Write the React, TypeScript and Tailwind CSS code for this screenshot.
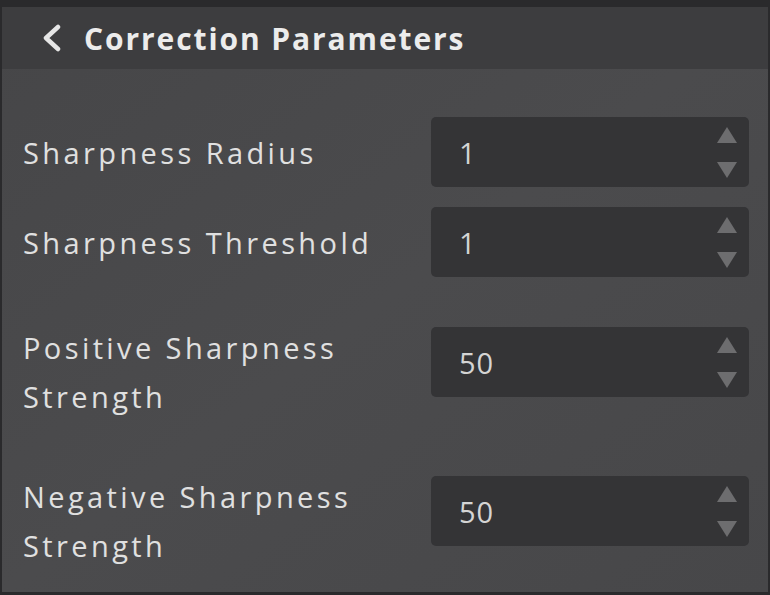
type Field = {
  label: string[]
  value: string
}

const fields: Field[] = [
  { label: ['Sharpness Radius'], value: '1' },
  { label: ['Sharpness Threshold'], value: '1' },
  { label: ['Positive Sharpness', 'Strength'], value: '50' },
  { label: ['Negative Sharpness', 'Strength'], value: '50' },
]

function Stepper({ value }: { value: string }) {
  return (
    <div className="flex h-[70px] w-[318px] shrink-0 items-center justify-between rounded-[5px] bg-[#343436] pl-[28px] pr-[11px]">
      <span className="text-[29px] leading-none tracking-[1px] text-[#d4d4d4]">{value}</span>
      <div className="flex flex-col gap-[17px]">
        <svg width="22" height="18" viewBox="0 0 22 18">
          <path d="M11 1 L21 17 L1 17 Z" fill="#6d6d6f" />
        </svg>
        <svg width="22" height="18" viewBox="0 0 22 18">
          <path d="M1 1 L21 1 L11 17 Z" fill="#6d6d6f" />
        </svg>
      </div>
    </div>
  )
}

export default function App() {
  return (
    <div
      className="flex h-[595px] w-[770px] flex-col overflow-hidden bg-[#2a2a2c] pt-[7px]"
      style={{ fontFamily: '"Open Sans", "Noto Sans", sans-serif' }}
    >
      <div className="flex flex-1 flex-col border-b-[3px] border-l-2 border-r-[2px] border-[#2a2a2c] bg-gradient-to-br from-[#464648] via-[#4b4b4d] to-[#474749]">
        <div className="flex h-[62px] items-center gap-[22px] bg-[#3d3d3f] pl-[40px]">
          <svg width="20" height="28" viewBox="0 0 20 28">
            <path d="M16 3 L4 14 L16 25" fill="none" stroke="#e6e6e6" strokeWidth="4.5" strokeLinecap="round" strokeLinejoin="round" />
          </svg>
          <h1 className="text-[30px] font-bold tracking-[1.9px] text-[#ececec]">Correction Parameters</h1>
        </div>

        <div className="flex flex-col pl-[21px] pr-[19px]">
          {fields.map((f, i) => (
            <div
              key={f.label.join(' ')}
              className={
                f.label.length === 1
                  ? 'flex h-[70px] items-center justify-between ' + (i === 0 ? 'mt-[48px]' : 'mt-[20px]')
                  : 'flex items-start justify-between ' + (i === 2 ? 'mt-[46px]' : 'mt-[51px]')
              }
            >
              <div className="text-[29px] leading-[49px] tracking-[3.4px] text-[#e0e0e0]">
                {f.label.map((l) => (
                  <div key={l}>{l}</div>
                ))}
              </div>
              <div className={f.label.length === 1 ? '' : 'pt-[4px]'}>
                <Stepper value={f.value} />
              </div>
            </div>
          ))}
        </div>
      </div>
    </div>
  )
}
